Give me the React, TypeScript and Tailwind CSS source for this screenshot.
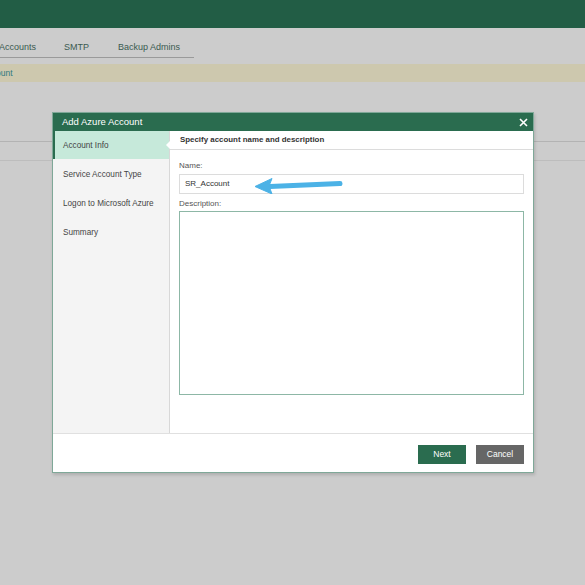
import React from "react";

export default function App() {
  const navItems = ["Service Account Type", "Logon to Microsoft Azure", "Summary"];
  return (
    <div className="relative w-[585px] h-[585px] overflow-hidden bg-[#cccccc] font-['Liberation_Sans',Arial,sans-serif]">
      <div className="h-[28px] bg-[#225d45]" />
      <div className="flex h-[30px] w-[194px] items-center whitespace-nowrap border-b border-[#9a9a9a] pt-[10px] text-[9px] text-[#3a5a50]">
        <span className="ml-[-1px]">Accounts</span>
        <span className="ml-[28px]">SMTP</span>
        <span className="ml-[29px]">Backup Admins</span>
      </div>
      <div className="mt-[6px] flex h-[18px] items-center bg-[#cdc8ae] text-[8.5px] text-[#2f7a80]">
        <span className="ml-[-4px]">ount</span>
      </div>
      <div className="mt-[59px] h-px bg-[#b3b3b3]" />
      <div className="mt-[18px] h-px bg-[#bdbdbd]" />

      <div className="absolute left-[52px] top-[112px] flex h-[361px] w-[482px] flex-col border border-[#7fa898] bg-white shadow-[1px_2px_3px_rgba(0,0,0,0.15)]">
        <div className="flex h-[18px] items-center justify-between bg-[#2a6c4f] pl-[9px] pr-[5px] text-white">
          <span className="text-[9.5px]">Add Azure Account</span>
          <svg width="9" height="9" viewBox="0 0 9 9" className="mt-px">
            <path d="M1 1 L8 8 M8 1 L1 8" stroke="white" strokeWidth="1.6" />
          </svg>
        </div>
        <div className="flex h-[302px]">
          <div className="w-[117px] border-r border-[#d8d8d8] bg-[#f4f4f4] text-[8.2px] text-[#444]">
            <div className="relative flex h-[28px] items-center border-l-[2px] border-[#2a6c4f] bg-[#c6e9da] pl-[8px] pt-[3px]">
              Account Info
              <div className="absolute right-[-1px] top-[10px] h-0 w-0 border-y-[4px] border-r-[4px] border-y-transparent border-r-white" />
            </div>
            {navItems.map((n) => (
              <div key={n} className="flex h-[29px] items-center pl-[10px] pt-[4px]">
                {n}
              </div>
            ))}
          </div>
          <div className="flex flex-1 flex-col">
            <div className="flex h-[19px] items-center border-b border-[#dcdcdc] pl-[10px] text-[7.9px] font-bold text-[#333]">
              Specify account name and description
            </div>
            <div className="px-[9px] pt-[10px]">
              <div className="text-[8px] leading-[11px] text-[#555]">Name:</div>
              <div className="relative mt-[3px] flex h-[20px] items-center border border-[#dcdcdc] pl-[5px] text-[8px] text-[#333]">
                SR_Account
                <svg className="absolute left-[74px] top-[1px]" width="90" height="18" viewBox="0 0 90 18">
                  <path d="M16 10.5 L86 7.5" stroke="#4cb2e6" strokeWidth="5" strokeLinecap="round" />
                  <path d="M1 10.5 L18 2.5 L15 10 L18 18 Z" fill="#4cb2e6" stroke="#4cb2e6" strokeWidth="1" strokeLinejoin="round" />
                </svg>
              </div>
              <div className="mt-[4px] text-[8px] leading-[11px] text-[#555]">Description:</div>
              <div className="mt-[2px] h-[184px] border border-[#8db7a6]" />
            </div>
          </div>
        </div>
        <div className="flex flex-1 items-center justify-end gap-[10px] border-t border-[#e0e0e0] pr-[9px] pt-[2px]">
          <button className="h-[19px] w-[48px] bg-[#2a6c4f] text-[8.5px] text-white">Next</button>
          <button className="h-[19px] w-[48px] bg-[#666666] text-[8.5px] text-white">Cancel</button>
        </div>
      </div>
    </div>
  );
}
